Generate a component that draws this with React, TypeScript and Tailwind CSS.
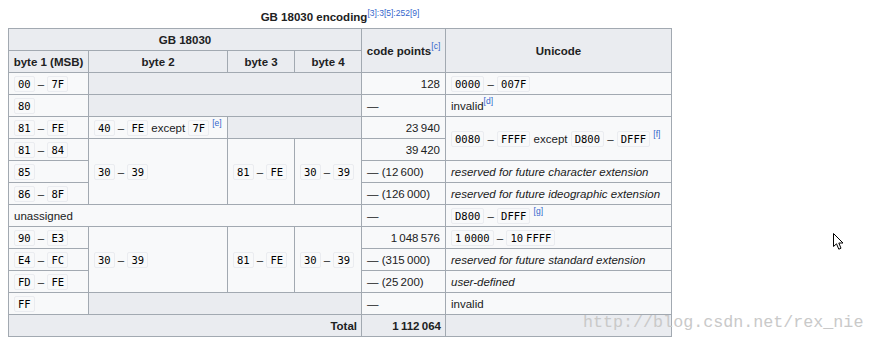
import React from "react";

const C = ({ children }: { children: React.ReactNode }) => (
  <code className="font-['DejaVu_Sans_Mono',monospace] text-[10.5px] bg-[#f8f9fa] border border-[#eaecf0] rounded-[2px] px-[3px] py-[1px] text-black">
    {children}
  </code>
);

const R = ({ a, b }: { a: React.ReactNode; b: React.ReactNode }) => (
  <>
    <C>{a}</C> – <C>{b}</C>
  </>
);

const S = ({ children }: { children: React.ReactNode }) => (
  <sup className="text-[8.5px] text-[#3366cc] font-normal leading-none top-[-0.6em]">{children}</sup>
);

const th = "border border-[#a2a9b1] bg-[#eaecf0] font-bold text-center px-[4px] py-0";
const td = "border border-[#a2a9b1] px-[5px] py-0 align-middle";
const gray = "border border-[#a2a9b1] bg-[#eaecf0]";
const num = "border border-[#a2a9b1] px-[5px] py-0 text-right";

export default function App() {
  return (
    <div className="relative w-[876px] h-[348px] bg-white overflow-hidden font-['Liberation_Sans',Arial,sans-serif] text-[11.5px] text-[#202122]">
      <div className="pl-[8px] pt-[10px]">
        <table className="table-fixed border-collapse bg-[#f8f9fa] w-[663px] leading-[14px]">
          <caption className="font-bold h-[18px] text-center">
            GB 18030 encoding<S>[3]:3[5]:252[9]</S>
          </caption>
          <colgroup>
            <col className="w-[80px]" />
            <col className="w-[139px]" />
            <col className="w-[67px]" />
            <col className="w-[67px]" />
            <col className="w-[84px]" />
            <col className="w-[226px]" />
          </colgroup>
          <thead>
            <tr className="h-[22px]">
              <th colSpan={4} className={th}>GB 18030</th>
              <th rowSpan={2} className={th}>
                code points<S>[c]</S>
              </th>
              <th rowSpan={2} className={th}>Unicode</th>
            </tr>
            <tr className="h-[22px]">
              <th className={th + " whitespace-nowrap"}>byte 1 (MSB)</th>
              <th className={th}>byte 2</th>
              <th className={th}>byte 3</th>
              <th className={th}>byte 4</th>
            </tr>
          </thead>
          <tbody>
            <tr className="h-[22px]">
              <td className={td}><R a="00" b="7F" /></td>
              <td colSpan={3} className={gray}></td>
              <td className={num}>128</td>
              <td className={td}><R a="0000" b="007F" /></td>
            </tr>
            <tr className="h-[22px]">
              <td className={td}><C>80</C></td>
              <td colSpan={3} className={gray}></td>
              <td className={td}>—</td>
              <td className={td}>invalid<S>[d]</S></td>
            </tr>
            <tr className="h-[22px]">
              <td className={td}><R a="81" b="FE" /></td>
              <td className={td + " whitespace-nowrap"}>
                <R a="40" b="FE" /> except <C>7F</C> <S>[e]</S>
              </td>
              <td colSpan={2} className={gray}></td>
              <td className={num}>23&#8201;940</td>
              <td rowSpan={2} className={td + " whitespace-nowrap"}>
                <R a="0080" b="FFFF" /> except <R a="D800" b="DFFF" /> <S>[f]</S>
              </td>
            </tr>
            <tr className="h-[22px]">
              <td className={td}><R a="81" b="84" /></td>
              <td rowSpan={3} className={td}><R a="30" b="39" /></td>
              <td rowSpan={3} className={td}><R a="81" b="FE" /></td>
              <td rowSpan={3} className={td}><R a="30" b="39" /></td>
              <td className={num}>39&#8201;420</td>
            </tr>
            <tr className="h-[22px]">
              <td className={td}><C>85</C></td>
              <td className={td}>— (12&#8201;600)</td>
              <td className={td + " italic whitespace-nowrap"}>reserved for future character extension</td>
            </tr>
            <tr className="h-[22px]">
              <td className={td}><R a="86" b="8F" /></td>
              <td className={td + " whitespace-nowrap"}>— (126&#8201;000)</td>
              <td className={td + " italic whitespace-nowrap"}>reserved for future ideographic extension</td>
            </tr>
            <tr className="h-[22px]">
              <td colSpan={4} className={td}>unassigned</td>
              <td className={td}>—</td>
              <td className={td}>
                <R a="D800" b="DFFF" /> <S>[g]</S>
              </td>
            </tr>
            <tr className="h-[22px]">
              <td className={td}><R a="90" b="E3" /></td>
              <td rowSpan={3} className={td}><R a="30" b="39" /></td>
              <td rowSpan={3} className={td}><R a="81" b="FE" /></td>
              <td rowSpan={3} className={td}><R a="30" b="39" /></td>
              <td className={num}>1&#8201;048&#8201;576</td>
              <td className={td}>
                <R
                  a={<>1<span className="ml-[3px]">0000</span></>}
                  b={<>10<span className="ml-[3px]">FFFF</span></>}
                />
              </td>
            </tr>
            <tr className="h-[22px]">
              <td className={td}><R a="E4" b="FC" /></td>
              <td className={td + " whitespace-nowrap"}>— (315&#8201;000)</td>
              <td className={td + " italic whitespace-nowrap"}>reserved for future standard extension</td>
            </tr>
            <tr className="h-[22px]">
              <td className={td}><R a="FD" b="FE" /></td>
              <td className={td}>— (25&#8201;200)</td>
              <td className={td + " italic"}>user-defined</td>
            </tr>
            <tr className="h-[22px]">
              <td className={td}><C>FF</C></td>
              <td colSpan={3} className={gray}></td>
              <td className={td}>—</td>
              <td className={td}>invalid</td>
            </tr>
            <tr className="h-[22px]">
              <th colSpan={4} className={th + " text-right"}>Total</th>
              <th className={th + " text-right"}>1&#8201;112&#8201;064</th>
              <th className={th}></th>
            </tr>
          </tbody>
        </table>
      </div>

      <div className="absolute left-[583px] top-[313px] font-['Liberation_Mono',monospace] text-[16.7px] leading-[20px] text-[#c9c9c9] whitespace-nowrap">
        http://blog.csdn.net/rex_nie
      </div>

      <svg className="absolute left-[833px] top-[233px]" width="12" height="18" viewBox="0 0 12 18">
        <path
          d="M0.5 0.5 L0.5 13.5 L3.5 10.8 L5.8 16.2 L8 15.2 L5.8 10 L10 10 Z"
          fill="white"
          stroke="black"
          strokeWidth="1"
          strokeLinejoin="round"
        />
      </svg>
    </div>
  );
}
